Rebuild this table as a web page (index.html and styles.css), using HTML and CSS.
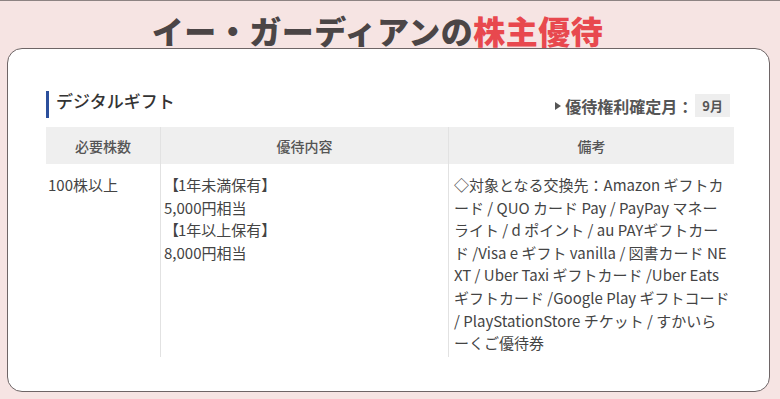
FILE: index.html
```html
<!DOCTYPE html>
<html lang="ja">
<head>
<meta charset="utf-8">
<link rel="stylesheet" href="styles.css">
</head>
<body>
<div class="page">
  <h1 class="title">イー・ガーディアンの<span class="accent">株主優待</span></h1>
  <div class="card">
    <div class="head-row">
      <h2 class="heading">デジタルギフト</h2>
      <div class="meta"><span class="tri"></span><span class="meta-label">優待権利確定月：</span><span class="month">9月</span></div>
    </div>
    <table class="tbl">
      <thead>
        <tr><th class="c1">必要株数</th><th class="c2">優待内容</th><th class="c3">備考</th></tr>
      </thead>
      <tbody>
        <tr>
          <td class="c1">100株以上</td>
          <td class="c2"><span class="br">【</span>1年未満保有】<br>5,000円相当<br><span class="br">【</span>1年以上保有】<br>8,000円相当</td>
          <td class="c3">◇対象となる交換先：Amazon ギフトカ<br>ード / QUO カード Pay / PayPay マネー<br>ライト / d ポイント / au PAYギフトカー<br>ド /Visa e ギフト vanilla / 図書カード NE<br>XT / Uber Taxi ギフトカード /Uber Eats<br>ギフトカード /Google Play ギフトコード<br>/ PlayStationStore チケット / すかいら<br>ーくご優待券</td>
        </tr>
      </tbody>
    </table>
  </div>
</div>
</body>
</html>
```

FILE: styles.css
```css
html, body {
  margin: 0;
  padding: 0;
}
body {
  background: #f6e4e3;
  font-family: "Noto Sans CJK JP", "Noto Sans", sans-serif;
  width: 780px;
  height: 399px;
  overflow: hidden;
}
.page {
  border-top: 1px solid #8d8383;
  height: 398px;
  box-sizing: border-box;
  padding: 0 10px 0 7px;
}
.title {
  margin: 0;
  height: 47px;
  font-size: 32px;
  line-height: 58px;
  font-weight: 900;
  text-align: center;
  color: #4b4546;
  letter-spacing: 0.5px;
  transform: translateX(-11px);
}
.accent {
  color: #e8484e;
}
.card {
  background: #fff;
  border: 1px solid #6e6566;
  border-radius: 15px;
  height: 344px;
  box-sizing: border-box;
  padding: 42px 35px 0 38px;
}
.head-row {
  display: flex;
  justify-content: space-between;
  align-items: flex-end;
  height: 27px;
}
.heading {
  margin: 0;
  border-left: 3px solid #2b4f9c;
  padding-left: 7px;
  height: 27px;
  line-height: 20px;
  font-size: 17px;
  font-weight: 500;
  color: #333;
}
.meta {
  display: flex;
  align-items: center;
  margin-right: 4px;
  margin-bottom: 1px;
  color: #555;
}
.tri {
  width: 0;
  height: 0;
  border-top: 4px solid transparent;
  border-bottom: 4px solid transparent;
  border-left: 6px solid #555;
  margin-right: 4px;
}
.meta-label {
  font-size: 16px;
  font-weight: 700;
  line-height: 22px;
}
.month {
  background: #eeeeee;
  font-size: 13px;
  font-weight: 700;
  padding: 0 7px;
  line-height: 23px;
  margin-left: 2px;
}
.tbl {
  margin-top: 9px;
  width: 688px;
  border-collapse: collapse;
  table-layout: fixed;
}
.tbl th {
  background: #efefef;
  height: 37px;
  padding: 0;
  font-size: 14px;
  font-weight: 500;
  color: #555;
  text-align: center;
  vertical-align: middle;
}
.tbl th.c1 { width: 114px; }
.tbl th.c2 { width: 287px; }
.tbl .c2, .tbl .c3 {
  border-left: 1px solid #e2e2e2;
}
.tbl td {
  vertical-align: top;
  font-size: 15px;
  line-height: 22.6px;
  color: #444;
  padding: 10px 0 2px 3px;
  height: 193px;
  box-sizing: border-box;
}
.tbl td.c1 { padding-left: 2px; }
.tbl td.c3 { padding-left: 5px; white-space: nowrap; }
.br {
  letter-spacing: -1px;
}
```
